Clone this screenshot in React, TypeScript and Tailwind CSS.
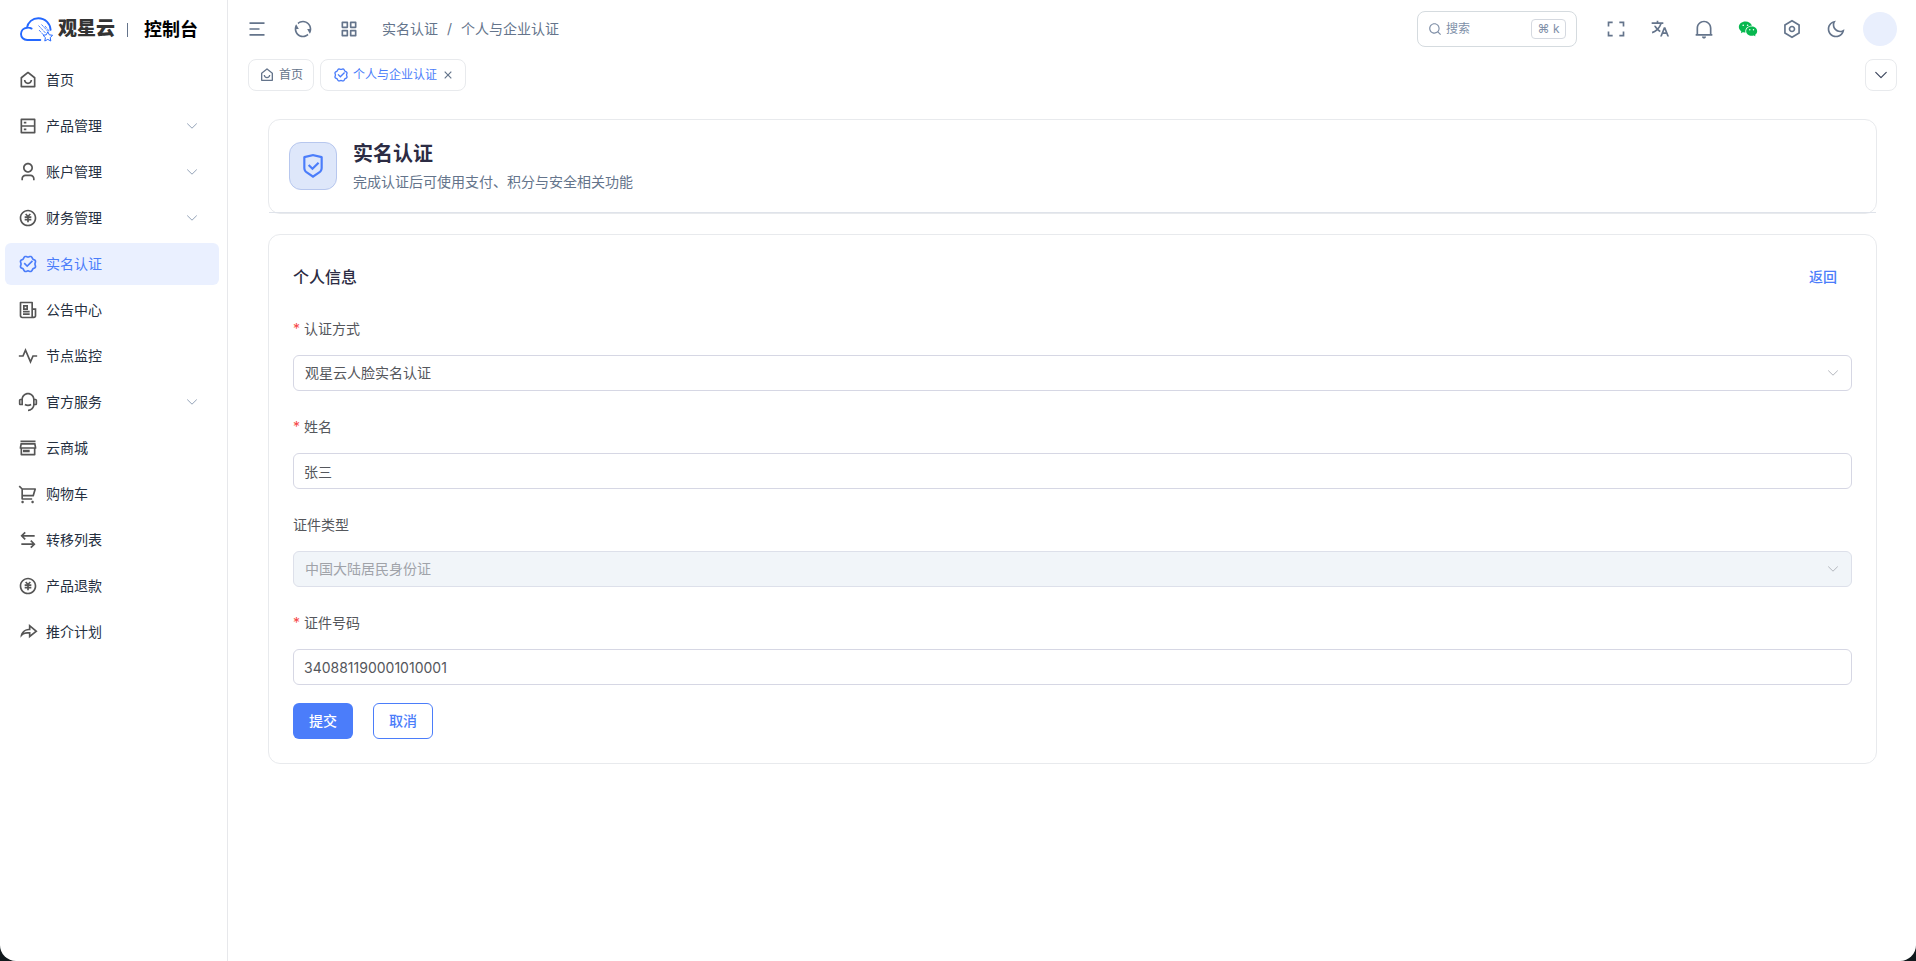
import { useState, type ReactNode } from "react";
import type { IconType } from "react-icons";
import {
  RiCloseLine,
  RiCustomerService2Line,
  RiFullscreenLine,
  RiFunctionLine,
  RiHomeSmile2Line,
  RiMenu2Line,
  RiMoneyCnyCircleLine,
  RiMoonLine,
  RiNewspaperLine,
  RiNotification2Line,
  RiPulseLine,
  RiRefreshLine,
  RiSearchLine,
  RiServerLine,
  RiSettingsLine,
  RiShareForwardLine,
  RiShieldCheckLine,
  RiShoppingCart2Line,
  RiStore3Line,
  RiArrowLeftRightLine,
  RiTranslate2,
  RiUser3Line,
  RiVerifiedBadgeLine,
  RiWechatFill,
} from "react-icons/ri";

type NavItem = { label: string; icon: IconType; expandable?: boolean; active?: boolean };

const navItems: NavItem[] = [
  { label: "首页", icon: RiHomeSmile2Line },
  { label: "产品管理", icon: RiServerLine, expandable: true },
  { label: "账户管理", icon: RiUser3Line, expandable: true },
  { label: "财务管理", icon: RiMoneyCnyCircleLine, expandable: true },
  { label: "实名认证", icon: RiVerifiedBadgeLine, active: true },
  { label: "公告中心", icon: RiNewspaperLine },
  { label: "节点监控", icon: RiPulseLine },
  { label: "官方服务", icon: RiCustomerService2Line, expandable: true },
  { label: "云商城", icon: RiStore3Line },
  { label: "购物车", icon: RiShoppingCart2Line },
  { label: "转移列表", icon: RiArrowLeftRightLine },
  { label: "产品退款", icon: RiMoneyCnyCircleLine },
  { label: "推介计划", icon: RiShareForwardLine },
];

function Chevron({ className }: { className: string }) {
  return (
    <svg viewBox="0 0 12 12" fill="none" stroke="currentColor" className={className} aria-hidden="true">
      <path d="M1.5 3.8 6 8.2l4.5-4.4" strokeLinecap="round" strokeLinejoin="round" />
    </svg>
  );
}

function CloudLogo() {
  return (
    <svg width="34" height="26" viewBox="0 0 34 26" fill="none" stroke="#2468ff" aria-hidden="true">
      <path
        d="M20.3 23H7.2C3.600 23 1 20.300 1 17.100c0-3.500 2.600-6.100 6-6.400C7.800 5.200 12.600 1.200 18.300 1.200c6.800 0 12 5.200 12.300 11.700M7 10.700c1.800-.2 3.300.1 4.600.9"
        strokeWidth="1.9"
        strokeLinecap="round"
      />
      <path d="m18.500 8.500 7 7.500M21.500 7.500l6.500 7M25 9l4.500 5.500M19 13l4.500 5" strokeWidth="0.8" strokeDasharray="3 0.7" />
      <path
        d="m27.800 14.800 1.500 3 3.300.5-2.400 2.300.6 3.400-3-1.600-3 1.600.6-3.400-2.400-2.300 3.300-.5z"
        fill="#fff"
        strokeWidth="1"
        strokeLinejoin="round"
      />
    </svg>
  );
}

function Sidebar() {
  return (
    <aside className="w-57 shrink-0 border-r border-[#e7e8eb]">
      <a href="#home" className="flex h-[59px] items-center pl-5 text-black">
        <CloudLogo />
        <span className="ml-1 text-[19px] font-black text-[#333]">观星云</span>
        <span className="ml-3 h-3.5 w-px bg-[#64748b]" />
        <span className="ml-4 text-lg font-semibold">控制台</span>
      </a>
      <nav aria-label="主导航" className="flex flex-col gap-1 pr-2 pl-[5px]">
        {navItems.map(({ label, icon: Icon, expandable, active }) => (
          <a
            key={label}
            href={`#${label}`}
            aria-current={active ? "page" : undefined}
            className={
              active
                ? "flex h-[42px] items-center rounded-md bg-[#eaf0ff] pr-[21px] pl-[13px] text-sm text-[#4b7dfa]"
                : "flex h-[42px] items-center rounded-md pr-[21px] pl-[13px] text-sm text-[#252f3f]"
            }
          >
            <Icon size={20} className={active ? "text-[#4b7dfa]" : "text-[#555]"} />
            <span className="ml-2 flex-1">{label}</span>
            {expandable && <Chevron className="size-3 text-[#94a3b8]" />}
          </a>
        ))}
      </nav>
    </aside>
  );
}

function IconButton({ label, children }: { label: string; children: ReactNode }) {
  return (
    <button type="button" aria-label={label} className="flex size-9 items-center justify-center">
      {children}
    </button>
  );
}

function TopBar() {
  return (
    <header className="flex h-[58px] items-center pr-[19px] pl-[11px] text-[#64748b]">
      <div className="flex gap-2.5">
        <IconButton label="折叠菜单"><RiMenu2Line size={20} /></IconButton>
        <IconButton label="刷新"><RiRefreshLine size={20} /></IconButton>
        <IconButton label="快速入口"><RiFunctionLine size={20} /></IconButton>
      </div>
      <nav aria-label="面包屑" className="ml-[15px] flex gap-[9px] text-sm">
        <a href="#verify">实名认证</a>
        <span>/</span>
        <span>个人与企业认证</span>
      </nav>
      <label className="ml-auto flex h-9 w-40 items-center rounded-lg border border-[#d5dbdf] px-2.5 text-xs text-[#8090a8]">
        <RiSearchLine size={14} className="shrink-0" />
        <input
          type="search"
          aria-label="搜索"
          placeholder="搜索"
          className="ml-1 min-w-0 flex-1 bg-transparent outline-none placeholder:text-[#8090a8]"
        />
        <kbd className="flex h-5 w-[35px] items-center justify-center rounded border border-[#d5d9e0] font-[inherit]">⌘ k</kbd>
      </label>
      <div className="ml-[21px] flex gap-2">
        <IconButton label="全屏"><RiFullscreenLine size={20} /></IconButton>
        <IconButton label="语言"><RiTranslate2 size={20} /></IconButton>
        <IconButton label="通知"><RiNotification2Line size={20} /></IconButton>
        <IconButton label="微信"><RiWechatFill size={20} className="text-[#07b84f]" /></IconButton>
        <IconButton label="设置"><RiSettingsLine size={20} /></IconButton>
        <IconButton label="深色模式"><RiMoonLine size={20} /></IconButton>
      </div>
      <button type="button" aria-label="用户菜单" className="ml-[9px] size-[34px] rounded-full bg-[#e9effd]" />
    </header>
  );
}

function TabBar() {
  return (
    <div className="flex items-center gap-1.5 pr-[19px] pl-5 pt-px text-xs">
      <a href="#home" className="flex h-8 items-center gap-1 rounded-lg border border-[#e8eaed] px-2.5 text-[#64748b]">
        <RiHomeSmile2Line size={16} />
        首页
      </a>
      <div className="flex h-8 items-center rounded-lg border border-[#e8eaed] pr-2.5 pl-3 text-[#4b7dfa]">
        <a href="#verify" className="flex items-center gap-1">
          <RiVerifiedBadgeLine size={16} />
          个人与企业认证
        </a>
        <button type="button" aria-label="关闭标签" className="ml-1 text-[#64748b]">
          <RiCloseLine size={14} />
        </button>
      </div>
      <button
        type="button"
        aria-label="更多标签"
        className="ml-auto flex size-8 items-center justify-center rounded-lg border border-[#e8eaed] text-[#39435a]"
      >
        <Chevron className="size-3.5" />
      </button>
    </div>
  );
}

function Field({ id, label, required, children }: { id: string; label: string; required?: boolean; children: ReactNode }) {
  return (
    <div>
      <label htmlFor={id} className="mb-[15px] flex h-[22px] items-center text-sm text-[#55575c]">
        {required && <span className="mr-1 text-[#f64747]">*</span>}
        {label}
      </label>
      {children}
    </div>
  );
}

const inputStyle = "block h-9 w-full rounded-md border border-[#d6d7e4] bg-white px-2.5 text-sm text-[#55575c] outline-none";

function SelectBox({ id, options, disabled }: { id: string; options: string[]; disabled?: boolean }) {
  return (
    <div className="relative">
      <select
        id={id}
        disabled={disabled}
        className="block h-9 w-full appearance-none rounded-md border border-[#d6d7e4] bg-white px-[11px] text-sm text-[#55575c] outline-none disabled:border-[#dde0ea] disabled:bg-[#f1f5f9] disabled:text-[#a0a3a9] disabled:opacity-100"
      >
        {options.map((option) => (
          <option key={option}>{option}</option>
        ))}
      </select>
      <Chevron className="pointer-events-none absolute top-3 right-[13px] size-3 text-[#b4b7be]" />
    </div>
  );
}

export default function App() {
  const [name, setName] = useState("张三");
  const [idNumber, setIdNumber] = useState("340881190001010001");

  return (
    <div className="bg-[#11191c] font-[Inter,'Noto_Sans_CJK_SC',sans-serif]">
      <div className="flex min-h-screen rounded-b-2xl bg-white">
        <Sidebar />
        <div className="min-w-0 flex-1">
          <TopBar />
          <TabBar />
          <main className="flex flex-col gap-5 pt-7 pr-[39px] pl-10">
            <section className="rounded-xl border border-[#e8eaed]">
              <div className="flex items-center gap-4 border-b border-[#dfe3ea] p-5">
                <div className="flex size-12 items-center justify-center rounded-xl border border-[#b7c7ee] bg-[#dee7fa] text-[#4b7dfa]">
                  <RiShieldCheckLine size={26} />
                </div>
                <div>
                  <h1 className="text-xl leading-7 font-semibold text-[#2c2c44]">实名认证</h1>
                  <p className="mt-1 text-sm leading-5 text-[#64748b]">完成认证后可使用支付、积分与安全相关功能</p>
                </div>
              </div>
            </section>

            <section className="rounded-xl border border-[#e8eaed] p-6">
              <div className="mb-[23px] flex h-9 items-center justify-between">
                <h2 className="text-base font-medium text-[#2c2c44]">个人信息</h2>
                <button type="button" className="h-9 px-[15px] text-sm font-medium text-[#4b7dfa]">返回</button>
              </div>
              <form onSubmit={(event) => event.preventDefault()}>
                <div className="flex flex-col gap-[25px]">
                  <Field id="method" label="认证方式" required>
                    <SelectBox id="method" options={["观星云人脸实名认证"]} />
                  </Field>
                  <Field id="name" label="姓名" required>
                    <input id="name" value={name} onChange={(event) => setName(event.target.value)} className={inputStyle} />
                  </Field>
                  <Field id="id-type" label="证件类型">
                    <SelectBox id="id-type" options={["中国大陆居民身份证"]} disabled />
                  </Field>
                  <Field id="id-number" label="证件号码" required>
                    <input id="id-number" value={idNumber} onChange={(event) => setIdNumber(event.target.value)} className={inputStyle} />
                  </Field>
                </div>
                <div className="mt-[18px] flex gap-5">
                  <button type="submit" className="h-9 w-15 rounded-md bg-[#4b7dfa] text-sm font-medium text-white">提交</button>
                  <button type="button" className="h-9 w-15 rounded-md border border-[#4b7dfa] text-sm font-medium text-[#4b7dfa]">取消</button>
                </div>
              </form>
            </section>
          </main>
        </div>
      </div>
    </div>
  );
}
